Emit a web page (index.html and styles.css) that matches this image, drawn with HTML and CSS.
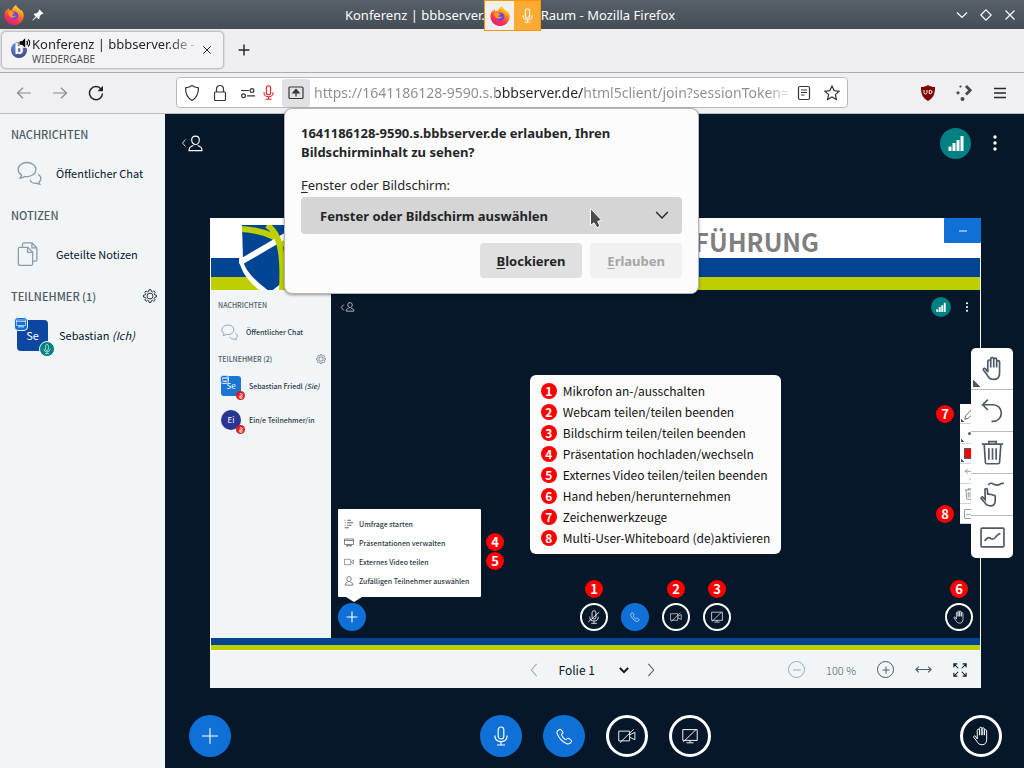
FILE: index.html
```html
<!DOCTYPE html>
<html lang="de">
<head>
    <meta charset="UTF-8">
    <meta name="viewport" content="width=device-width, initial-scale=1.0">
    <title>Konferenz | bbbserver.de</title>
    <link rel="stylesheet" href="styles.css">
</head>
<body>
    <!-- Icons -->
    <svg class="sprite" aria-hidden="true">
        <defs>
            <linearGradient id="fox-body" x1="0.8" y1="0" x2="0.3" y2="1">
                <stop offset="0" stop-color="#fff44f"/>
                <stop offset="0.35" stop-color="#ff980e"/>
                <stop offset="0.7" stop-color="#ff3647"/>
                <stop offset="1" stop-color="#e31587"/>
            </linearGradient>
        </defs>
        <symbol id="firefox" viewBox="0 0 20 20">
            <path fill="url(#fox-body)" stroke="none" d="M12.2 0c.2 1.6 1.300 2.400 2.800 3.600 1 .8 1.500 1.500 1.900 2.300l.3-1.200C19 6.600 19.800 8.600 19.800 10.600A9.700 9.500 0 0 1 .4 10.600c0-2.600.8-4.600 1.900-6.200l.5 1.300L4.400 3l.8 2.300c.8-.3 1.900-.4 2.800-.1C8.200 3.200 10 1 12.200 0z"/>
            <circle cx="10.200" cy="10.800" r="4.300" fill="#7542e5" stroke="none"/>
            <path fill="#ff9a1f" stroke="none" d="M4 7.200c2-.9 3.500-.5 4.700.3l2 .3c-.2 1.200-2.200 1.300-2.500 2.200.3 1.200 2 1.300 3.700.6-1 2.200-3.500 2.700-5.500 1.300C4.800 10.800 4 9 4 7.200z"/>
        </symbol>
        <symbol id="pin" viewBox="0 0 12 12">
            <path fill="currentColor" stroke="none" d="M7.500.5l4 4-1 .8-.8-.2-2 2.200-.2 2.200-1 .8-2-2L1 11.600.4 11l3.300-3.500-2-2 .8-1 2.200-.2 2.200-2L6.700 1.300z"/>
        </symbol>
        <symbol id="chev-down" viewBox="0 0 12 12"><path d="M1 3.500l5 5 5-5"/></symbol>
        <symbol id="chev-left" viewBox="0 0 12 16"><path d="M9 1L3 8l6 7"/></symbol>
        <symbol id="chev-right" viewBox="0 0 12 16"><path d="M3 1l6 7-6 7"/></symbol>
        <symbol id="diamond" viewBox="0 0 12 12"><path d="M6 .8L11.200 6 6 11.200.8 6z"/></symbol>
        <symbol id="cross" viewBox="0 0 12 12"><path d="M1.500 1.500l9 9m0-9l-9 9"/></symbol>
        <symbol id="plus" viewBox="0 0 20 20"><path d="M10 1v18M1 10h18"/></symbol>
        <symbol id="minus" viewBox="0 0 10 10"><path d="M0 5h10"/></symbol>
        <symbol id="arrow-left" viewBox="0 0 16 12"><path d="M15 6H1.500M7 .8L1.500 6 7 11.200"/></symbol>
        <symbol id="arrow-right" viewBox="0 0 16 12"><path d="M1 6h13.500M9 .8L14.500 6 9 11.200"/></symbol>
        <symbol id="reload" viewBox="0 0 16 16">
            <path d="M13.200 4.200A6.500 6.500 0 1 0 14.500 8.500"/><path fill="currentColor" stroke="none" d="M15 .8v5.500H9.500z"/>
        </symbol>
        <symbol id="shield" viewBox="0 0 16 18"><path d="M8 1.500c2 1.500 4 2 6.500 2.300 0 6-2 10.200-6.500 12.700C3.500 14 1.500 9.800 1.500 3.800 4 3.500 6 3 8 1.500z"/></symbol>
        <symbol id="lock" viewBox="0 0 14 18"><rect x="1.500" y="8" width="11" height="8.500" rx="1"/><path d="M3.500 8V5a3.500 3.500 0 0 1 7 0v3"/></symbol>
        <symbol id="perms" viewBox="0 0 16 10"><path d="M1 2.500h8M7 7.800h8"/><circle cx="12" cy="2.500" r="1.900"/><circle cx="3.500" cy="7.800" r="1.900"/></symbol>
        <symbol id="mic" viewBox="0 0 14 20">
            <rect x="4.200" y="1" width="5.600" height="12" rx="2.800"/><path d="M1 9.500v1.200a6 5 0 0 0 12 0V9.500M7 16v2.800M3 19h8"/>
        </symbol>
        <symbol id="mic-off" viewBox="0 0 18 20">
            <rect x="6.200" y="1" width="5.600" height="12" rx="2.800"/><path d="M3 9.500v1.200a6 5 0 0 0 12 0V9.500M9 16v2.800M5 19h8M1 17L16.500 3"/>
        </symbol>
        <symbol id="share" viewBox="0 0 16 14"><rect x="1" y="1" width="14" height="11.500" rx="1"/><path fill="currentColor" d="M8 3.500L5 6.800h6zM8 6.500v4"/></symbol>
        <symbol id="reader" viewBox="0 0 14 16"><rect x="1.500" y="1.500" width="11" height="13" rx="1.500"/><path d="M4 5h6M4 7.500h6M4 10h3.500"/></symbol>
        <symbol id="star" viewBox="0 0 16 16"><path d="M8 1l2.100 4.600 5 .6-3.700 3.400 1 5L8 12l-4.400 2.600 1-5L.9 6.200l5-.6z"/></symbol>
        <symbol id="burger" viewBox="0 0 14 12"><path d="M1 1.500h12M1 6h12M1 10.500h12"/></symbol>
        <symbol id="plasma" viewBox="0 0 18 16">
            <g fill="currentColor" stroke="none"><circle cx="5.500" cy="1.500" r="1.100"/><circle cx="3" cy="7.800" r="1.600"/><circle cx="7.500" cy="14" r="2"/></g>
            <path stroke-width="2.800" d="M11 1l4.200 4.300L11 9.500"/>
        </symbol>
        <symbol id="speaker" viewBox="0 0 12 10">
            <path fill="currentColor" stroke="none" d="M.5 3.200H3L6.200.3v9.400L3 6.800H.5z"/><path d="M7.700 3c1 1.200 1 2.800 0 4M9.200 1.500c2 2 2 5 0 7"/>
        </symbol>
        <symbol id="chat" viewBox="0 0 25 25">
            <path d="M10 1.500C5 1.500 1.200 4.600 1.200 8.600c0 2.400 1.200 4.200 3.300 5.500-.1 1.200-.6 2-1.500 2.900 1.900-.1 3.300-.6 4.500-1.600.8.200 1.600.2 2.500.2 5 0 8.900-3 8.900-7S15 1.500 10 1.500z"/>
            <path d="M21 13.500c1.700.8 2.900 2.300 2.900 4 0 1.500-.8 2.800-2.100 3.700.1.800.4 1.400 1 2-1.300 0-2.200-.4-3-1-3 .6-6-.7-6.600-3.200"/>
        </symbol>
        <symbol id="notes" viewBox="0 0 25 26">
            <path d="M2.300 5.500h8.500l5 5v12a1.700 1.700 0 0 1-1.700 1.700H2.300A1.500 1.500 0 0 1 .9 22.500V7a1.500 1.500 0 0 1 1.400-1.500z"/><path d="M10.500 5.700v5h5M5.200 5V2.500A1.500 1.500 0 0 1 6.700 1h8.500l5 5.200v12.300a1.600 1.600 0 0 1-1.600 1.500h-2.500M15 1.200v5h5"/>
        </symbol>
        <symbol id="gear" viewBox="0 0 20 20">
            <path d="M8.600 1h2.800l.5 2.500 1.600.7 2.100-1.500 1.900 1.900L16 6.700l.7 1.700 2.500.4v2.700l-2.500.5-.7 1.600 1.500 2.100-1.900 1.900-2.100-1.500-1.600.7-.5 2.400H8.600l-.5-2.400-1.600-.7-2.100 1.500-1.900-1.900L4 13.600 3.300 12l-2.500-.5V8.800l2.500-.4L4 6.700 2.500 4.600l1.900-1.900 2.100 1.500 1.600-.7z"/><circle cx="10" cy="10.100" r="4.200"/>
        </symbol>
        <symbol id="person" viewBox="0 0 16 18"><path d="M8 1.200c2.700 0 4 1.700 4 4 0 2.500-1.600 4.800-4 4.800S4 7.700 4 5.200c0-2.300 1.300-4 4-4zM5.700 11C4 12 1.200 12.500 1.200 15v1.500h13.600V15c0-2.500-2.800-3-4.500-4"/></symbol>
        <symbol id="bars" viewBox="0 0 16 16"><path fill="currentColor" stroke="none" d="M.5 11.500h3V16h-3zM4.500 8h3v8h-3zM8.500 5h3v11h-3zM12.500 1h3v15h-3z"/></symbol>
        <symbol id="dots" viewBox="0 0 4 16"><g fill="currentColor" stroke="none"><circle cx="2" cy="2" r="1.700"/><circle cx="2" cy="8" r="1.700"/><circle cx="2" cy="14" r="1.700"/></g></symbol>
        <symbol id="board" viewBox="0 0 20 18"><path d="M1 1h18v11H1zM1 4h18M6 16.500l2.500-4.300M14 16.500l-2.500-4.300M4 14.500h12"/></symbol>
        <symbol id="phone" viewBox="0 0 20 20"><path d="M3.200 2.300C1.500 3 .8 5 1.600 7c2 5 5.500 9 10.500 11.200 2 1 4.200.3 5.500-1.200 1-1.200.8-2.200-.2-3l-2-1.500c-1-.7-2-.5-2.700.4-.6.8-1.400 1-2.200.3-1.700-1.200-3-2.900-3.800-4.700-.4-.9-.1-1.500.6-2C8.200 6 8.300 5 7.700 4.200L6.300 2.500c-.8-1-1.900-1.100-3.100-.2z"/></symbol>
        <symbol id="cam-off" viewBox="0 0 24 20"><path d="M1 3.500h14.500v13H1zM15.500 8.500L22.500 5v10l-7-3.500M2.500 19L21 1"/></symbol>
        <symbol id="cam" viewBox="0 0 24 20"><path d="M1 3.500h15v13H1zM18.500 8.500L22.500 5v10l-4-3.500z"/></symbol>
        <symbol id="desk-off" viewBox="0 0 20 20"><path d="M1 2h18v13.500H1zM10 15.500v2.700M5.500 18.500h9M1.500 17.500L17.500 2"/></symbol>
        <symbol id="hand" viewBox="0 0 20 24"><path d="M5.500 15.500V5.200a1.400 1.400 0 0 1 2.800 0V11 3a1.400 1.400 0 0 1 2.900 0v8-7.500a1.400 1.400 0 0 1 2.800 0V11 5.800a1.400 1.400 0 0 1 2.800 0V16c0 4.200-2 6.500-5.500 6.500-3.300 0-5-1.500-6.300-4.200L1.300 13.500c-.5-1.300 1-2.300 2-1.300l2.200 3.300"/></symbol>
        <symbol id="undo" viewBox="0 0 22 24"><path d="M6.500 1.500L1.500 6.500l5 5M1.800 6.500h9.700a8 8 0 0 1 0 16H10"/></symbol>
        <symbol id="trash" viewBox="0 0 22 24"><path d="M.8 4h20.400M7.500 4V1.500h7V4M3 4l1.200 17.500a1.500 1.500 0 0 0 1.500 1.300h10.600a1.500 1.500 0 0 0 1.500-1.300L19 4M7.500 8v11M11 8v11M14.500 8v11"/></symbol>
        <symbol id="multi" viewBox="0 0 24 24"><path d="M8 3c1.500-3 4-1.500 6-.5s4 .5 6-.8L23 1"/><path d="M5 15.500L4.700 7.500c0-1.500 2.300-1.500 2.400 0l.3 5c0-1.300 2.500-1.300 2.500.3 0-1.200 2.400-1.200 2.500.5 0-1 2.200-1 2.200.6v4c0 3-1.600 5-4.700 5-2.700 0-4.200-1.200-5.400-3.300L1.300 16c-.7-1.300.9-2.200 1.700-1.200L5 17z"/></symbol>
        <symbol id="chart" viewBox="0 0 24 20"><rect x="1" y="1" width="22" height="18" rx="1"/><path d="M4.500 13.500c2-3.500 4-4 6-2.500s3.500 0 5-2 2.500-2 4-3"/></symbol>
        <symbol id="pen" viewBox="0 0 16 16"><path d="M1 15l1.500-5L11 1.500 14.500 5 6 13.500z"/></symbol>
        <symbol id="list" viewBox="0 0 16 16"><path d="M1 2h1.500M5 2h6M1 6h1.500M5 6h10M1 10h1.500M5 10h7M1 14h7"/></symbol>
        <symbol id="fit" viewBox="0 0 18 8"><path d="M1 4h16M4 1L1 4l3 3M14 1l3 3-3 3"/></symbol>
        <symbol id="full" viewBox="0 0 16 16"><path d="M1 5V1h4M1 1l5 5M11 1h4v4M15 1l-5 5M1 11v4h4M1 15l5-5M15 11v4h-4M15 15l-5-5"/></symbol>
    </svg>

    <!-- Fensterleiste -->
    <header class="titlebar">
        <div class="titlebar-side">
            <svg class="icon s20"><use href="#firefox"/></svg>
            <svg class="icon s12"><use href="#pin"/></svg>
        </div>
        <div class="titlebar-text">Konferenz | bbbserver.de - BBB-Raum - Mozilla Firefox</div>
        <div class="titlebar-side window-buttons">
            <button aria-label="Minimieren"><svg class="icon s12"><use href="#chev-down"/></svg></button>
            <button aria-label="Maximieren"><svg class="icon s12"><use href="#diamond"/></svg></button>
            <button aria-label="Schließen"><svg class="icon s12"><use href="#cross"/></svg></button>
        </div>
        <div class="sharing-badge">
            <span><svg class="icon s20"><use href="#firefox"/></svg></span>
            <span class="sharing-mic"><svg class="icon mic16"><use href="#mic"/></svg></span>
        </div>
    </header>

    <!-- Tabs -->
    <div class="tabbar">
        <div class="tab">
            <div class="favicon">b<svg class="icon speaker"><use href="#speaker"/></svg></div>
            <div class="tab-label">
                <div class="tab-title">Konferenz | bbbserver.de -</div>
                <div class="tab-sub">WIEDERGABE</div>
            </div>
            <button class="tab-close" aria-label="Tab schließen"><svg class="icon s10"><use href="#cross"/></svg></button>
        </div>
        <button class="tab-new" aria-label="Neuer Tab"><svg class="icon s12"><use href="#plus"/></svg></button>
    </div>

    <!-- Navigation -->
    <div class="toolbar">
        <div class="nav-buttons">
            <button class="faded" aria-label="Zurück"><svg class="icon s16"><use href="#arrow-left"/></svg></button>
            <button class="faded" aria-label="Vor"><svg class="icon s16"><use href="#arrow-right"/></svg></button>
            <button aria-label="Neu laden"><svg class="icon s16 thick"><use href="#reload"/></svg></button>
        </div>
        <div class="urlbar">
            <button class="ub-btn" aria-label="Schutz"><svg class="icon s18"><use href="#shield"/></svg></button>
            <button class="ub-btn" aria-label="Verbindung"><svg class="icon s18"><use href="#lock"/></svg></button>
            <button class="ub-btn slim perms" aria-label="Berechtigungen"><svg class="icon s16"><use href="#perms"/></svg></button>
            <button class="ub-btn slim red" aria-label="Mikrofon"><svg class="icon mic16"><use href="#mic"/></svg></button>
            <button class="ub-btn share" aria-label="Bildschirmfreigabe"><svg class="icon s16"><use href="#share"/></svg></button>
            <input class="url" type="text" aria-label="Adresse" value="https://1641186128-9590.s.bbbserver.de/html5client/join?sessionToken=">
            <button class="ub-btn" aria-label="Leseansicht"><svg class="icon s16"><use href="#reader"/></svg></button>
            <button class="ub-btn" aria-label="Lesezeichen"><svg class="icon s16"><use href="#star"/></svg></button>

            <div class="popup" role="dialog" aria-labelledby="popup-title">
                <h2 id="popup-title">1641186128-9590.s.bbbserver.de erlauben, Ihren Bildschirminhalt zu sehen?</h2>
                <label for="screen"><u>F</u>enster oder Bildschirm:</label>
                <div class="popup-select">
                    <select id="screen"><option>Fenster oder Bildschirm auswählen</option></select>
                    <svg class="icon s14"><use href="#chev-down"/></svg>
                    <svg class="cursor" viewBox="0 0 14 22"><path d="M1.500 1.500v17l3.500-2.700 3 5 3-1.700-2.300-4.600 3.800-1.400z" fill="#4a4a4a" stroke="#fff"/></svg>
                </div>
                <div class="popup-buttons">
                    <button><span><u>B</u>lockieren</span></button>
                    <button disabled><span><u>E</u>rlauben</span></button>
                </div>
            </div>
        </div>
        <div class="ext-buttons">
            <button class="ublock" aria-label="uBlock Origin"><svg viewBox="0 0 14 16"><path d="M7 0c2 1.400 4.500 2 7 2 0 7-1.500 11-7 14C1.500 13 0 9 0 2c2.500 0 5-.6 7-2z" fill="#800000"/><path d="M3 5v2.500a1.500 1.500 0 0 0 3 0V5M8.300 5v4M8.300 5.500a1.800 1.800 0 1 1 0 3" fill="none" stroke="#fff"/></svg></button>
            <button aria-label="Plasma Integration"><svg class="icon s18 dim"><use href="#plasma"/></svg></button>
            <button aria-label="Menü"><svg class="icon s14 thick"><use href="#burger"/></svg></button>
        </div>
    </div>

    <div class="app">
        <!-- Linke Seitenleiste -->
        <aside class="sidebar">
            <h2>NACHRICHTEN</h2>
            <a class="side-item" href="#chat"><svg class="icon s25 muted"><use href="#chat"/></svg><span>Öffentlicher Chat</span></a>
            <h2>NOTIZEN</h2>
            <a class="side-item" href="#notes"><svg class="icon s25 muted"><use href="#notes"/></svg><span>Geteilte Notizen</span></a>
            <h2>TEILNEHMER (1) <button aria-label="Teilnehmer verwalten"><svg class="icon s14"><use href="#gear"/></svg></button></h2>
            <div class="side-item user">
                <div class="avatar">Se
                    <span class="presenter"><svg class="icon s10"><use href="#board"/></svg></span>
                    <span class="voice"><svg class="icon s10"><use href="#mic"/></svg></span>
                </div>
                <span>Sebastian <i>(Ich)</i></span>
            </div>
        </aside>

        <main class="main">
            <div class="main-head">
                <button class="toggle" aria-label="Teilnehmerliste"><svg class="icon chev"><use href="#chev-left"/></svg><svg class="icon s17"><use href="#person"/></svg></button>
                <div class="head-right">
                    <button class="signal" aria-label="Verbindungsstatus"><svg class="icon s16"><use href="#bars"/></svg></button>
                    <button aria-label="Optionen"><svg class="icon s16"><use href="#dots"/></svg></button>
                </div>
            </div>

            <section class="presentation">
                <div class="slide">
                    <div class="slide-head">
                        <svg class="crest" viewBox="0 0 62 65">
                            <path d="M0 0h62v30C62 45 50 56 43 65H20C8 55 1 45 0 33z" fill="#fff"/>
                            <path d="M3 0h56v30c-1 15-15 28-28 37C18 57 5 46 4 34z" fill="#004494"/>
                            <path d="M3 4c18 1 32 6 44 16 5 5 9 9 12 14" fill="none" stroke="#becf00" stroke-width="6"/>
                            <path d="M0 38L60 3" stroke="#fff" stroke-width="6"/>
                            <path d="M28 0c12 8 17 25 15 65" fill="none" stroke="#becf00" stroke-width="6"/>
                        </svg>
                        <h1>FÜHRUNG</h1>
                    </div>
                    <div class="slide-body">
                        <div class="mini-side">
                            <h3>NACHRICHTEN</h3>
                            <div class="mini-item"><svg class="icon s17 muted"><use href="#chat"/></svg>Öffentlicher Chat</div>
                            <h3>TEILNEHMER (2) <svg class="icon s10"><use href="#gear"/></svg></h3>
                            <div class="mini-item"><div class="mini-avatar blue">Se<span class="mini-pres"><svg class="icon"><use href="#board"/></svg></span><span class="mini-muted"><svg class="icon"><use href="#mic-off"/></svg></span></div><span>Sebastian Friedl <i>(Sie)</i></span></div>
                            <div class="mini-item last"><div class="mini-avatar round">Ei<span class="mini-muted"><svg class="icon"><use href="#mic-off"/></svg></span></div>Ein/e Teilnehmer/in</div>
                        </div>
                        <div class="stage">
                            <div class="stage-head">
                                <div class="toggle"><svg class="icon chev"><use href="#chev-left"/></svg><svg class="icon s10"><use href="#person"/></svg></div>
                                <div class="stage-right">
                                    <div class="signal small"><svg class="icon s10"><use href="#bars"/></svg></div>
                                    <svg class="icon s10"><use href="#dots"/></svg>
                                </div>
                            </div>
                            <ul class="legend">
                                <li><b class="num">1</b>Mikrofon an-/ausschalten</li>
                                <li><b class="num">2</b>Webcam teilen/teilen beenden</li>
                                <li><b class="num">3</b>Bildschirm teilen/teilen beenden</li>
                                <li><b class="num">4</b>Präsentation hochladen/wechseln</li>
                                <li><b class="num">5</b>Externes Video teilen/teilen beenden</li>
                                <li><b class="num">6</b>Hand heben/herunternehmen</li>
                                <li><b class="num">7</b>Zeichenwerkzeuge</li>
                                <li><b class="num">8</b>Multi-User-Whiteboard (de)aktivieren</li>
                            </ul>
                            <div class="stage-foot">
                                <div class="dot fill">
                                    <svg class="icon s12"><use href="#plus"/></svg>
                                    <ul class="mini-menu">
                                        <li><svg class="icon s10"><use href="#list"/></svg>Umfrage starten</li>
                                        <li><svg class="icon s10"><use href="#board"/></svg>Präsentationen verwalten<b class="num beside">4</b></li>
                                        <li><svg class="icon s10"><use href="#cam"/></svg>Externes Video teilen<b class="num beside">5</b></li>
                                        <li><svg class="icon s10"><use href="#person"/></svg>Zufälligen Teilnehmer auswählen</li>
                                    </ul>
                                </div>
                                <div class="dot-group">
                                    <div class="dot"><svg class="icon s14"><use href="#mic-off"/></svg><b class="num above">1</b></div>
                                    <div class="dot fill"><svg class="icon s10"><use href="#phone"/></svg></div>
                                    <div class="dot"><svg class="icon s12"><use href="#cam-off"/></svg><b class="num above">2</b></div>
                                    <div class="dot"><svg class="icon s12"><use href="#desk-off"/></svg><b class="num above">3</b></div>
                                </div>
                                <div class="dot"><svg class="icon s14"><use href="#hand"/></svg><b class="num above">6</b></div>
                            </div>
                            <ul class="mini-tools">
                                <li class="corner"><svg class="icon s12"><use href="#pen"/></svg><b class="num before">7</b></li>
                                <li class="corner"><i class="point"></i></li>
                                <li class="corner"><i class="swatch"></i></li>
                                <li><svg class="icon s12"><use href="#undo"/></svg></li>
                                <li><svg class="icon s12"><use href="#trash"/></svg></li>
                                <li><svg class="icon s12"><use href="#chart"/></svg><b class="num before">8</b></li>
                            </ul>
                        </div>
                    </div>
                    <div class="slide-stripe"></div>
                </div>

                <div class="controls">
                    <div class="pager">
                        <button class="faded" aria-label="Vorherige Folie"><svg class="icon s14"><use href="#chev-left"/></svg></button>
                        <div class="page-select">
                            <select aria-label="Folie auswählen"><option>Folie 1</option></select>
                            <svg class="icon s10 bold"><use href="#chev-down"/></svg>
                        </div>
                        <button aria-label="Nächste Folie"><svg class="icon s14"><use href="#chev-right"/></svg></button>
                    </div>
                    <div class="zoom">
                        <button class="ring faded" aria-label="Verkleinern"><svg class="icon s8"><use href="#minus"/></svg></button>
                        <span>100 %</span>
                        <button class="ring" aria-label="Vergrößern"><svg class="icon s8 bold"><use href="#plus"/></svg></button>
                        <button aria-label="An Breite anpassen"><svg class="icon s17"><use href="#fit"/></svg></button>
                        <button class="dark" aria-label="Vollbild"><svg class="icon s14"><use href="#full"/></svg></button>
                    </div>
                </div>

                <button class="minimize" aria-label="Präsentation minimieren"><svg class="icon s8"><use href="#minus"/></svg></button>

                <div class="tools">
                    <button class="corner" aria-label="Verschieben"><svg class="icon s25"><use href="#hand"/></svg></button>
                    <button aria-label="Rückgängig"><svg class="icon s25"><use href="#undo"/></svg></button>
                    <button aria-label="Löschen"><svg class="icon s25"><use href="#trash"/></svg></button>
                    <button aria-label="Mehrbenutzermodus"><svg class="icon s25"><use href="#multi"/></svg></button>
                    <button aria-label="Whiteboard"><svg class="icon s25"><use href="#chart"/></svg></button>
                </div>
            </section>

            <footer class="actions">
                <button class="round-btn fill" aria-label="Aktionen"><svg class="icon s18"><use href="#plus"/></svg></button>
                <div class="action-group">
                    <button class="round-btn fill" aria-label="Stummschalten"><svg class="icon s20"><use href="#mic"/></svg></button>
                    <button class="round-btn fill" aria-label="Audio beenden"><svg class="icon s17"><use href="#phone"/></svg></button>
                    <button class="round-btn" aria-label="Webcam freigeben"><svg class="icon s18"><use href="#cam-off"/></svg></button>
                    <button class="round-btn" aria-label="Bildschirm freigeben"><svg class="icon s16"><use href="#desk-off"/></svg></button>
                </div>
                <button class="round-btn" aria-label="Hand heben"><svg class="icon s20"><use href="#hand"/></svg></button>
            </footer>
        </main>
    </div>
</body>
</html>
```
FILE: styles.css
```css
* {
    box-sizing: border-box;
}
body {
    margin: 0;
    height: 100vh;
    display: flex;
    flex-direction: column;
    overflow: hidden;
    font-family: "Noto Sans", sans-serif;
    font-size: 13px;
    color: #232629;
    background: #06172a;
}
button, select, input {
    font: inherit;
    color: inherit;
    border: 0;
    padding: 0;
    margin: 0;
    background: none;
}
button {
    display: flex;
    align-items: center;
    justify-content: center;
}
select {
    appearance: none;
}
ul {
    list-style: none;
    margin: 0;
    padding: 0;
}
h1, h2, h3 {
    margin: 0;
}

/* icons */
.sprite {
    position: absolute;
    width: 0;
    height: 0;
}
.icon {
    fill: none;
    stroke: currentColor;
    stroke-width: 1.2;
    flex: none;
}
.s8 { width: 8px; height: 8px; }
.s10 { width: 10px; height: 10px; }
.s12 { width: 12px; height: 12px; }
.s14 { width: 14px; height: 14px; }
.s16 { width: 16px; height: 16px; }
.s17 { width: 17px; height: 17px; }
.s18 { width: 18px; height: 18px; }
.s20 { width: 20px; height: 20px; }
.s25 { width: 25px; height: 25px; }
.mic16 { width: 11px; height: 15px; stroke-width: 1.5; }
.thick { stroke-width: 1.5; }
.bold { stroke-width: 2.4; }
.muted { color: #8b9aa8; stroke-width: 1.3; }
.dim { color: #45494d; }
.faded { opacity: 0.5; }

/* title bar */
.titlebar {
    position: relative;
    display: flex;
    flex: none;
    align-items: center;
    justify-content: space-between;
    height: 29px;
    padding: 0 8px 0 4px;
    background: linear-gradient(#566069, #454e56);
    color: #fcfcfc;
}
.titlebar-side {
    display: flex;
    align-items: center;
    gap: 8px;
    width: 80px;
}
.window-buttons {
    justify-content: flex-end;
    gap: 12px;
}
.sharing-badge {
    position: absolute;
    top: 0;
    left: calc(50% - 28px);
    display: flex;
    width: 57px;
    height: 31px;
    border: 1px solid #ff9500;
    background: #f0f0f0;
    z-index: 3;
}
.sharing-badge span {
    flex: 1;
    display: flex;
    align-items: center;
    justify-content: center;
}
.sharing-badge .sharing-mic {
    flex: none;
    width: 26px;
    background: #ffaa33;
}

/* tabs */
.tabbar {
    display: flex;
    flex: none;
    align-items: center;
    height: 44px;
    padding: 1px 1px 2px;
    background: #efeff1;
    border-bottom: 1px solid #a9abae;
}
.tab {
    display: flex;
    align-items: center;
    width: 223px;
    height: 38px;
    padding: 0 11px 0 9px;
    background: #f3f3f6;
    border: 1px solid #c0c2c5;
    border-radius: 5px;
    box-shadow: 0 0 2px #aaa;
}
.favicon {
    position: relative;
    width: 16px;
    height: 16px;
    margin-right: 5px;
    border-radius: 50%;
    background: radial-gradient(circle at 40% 30%, #7d8fc4, #27357e);
    color: #fff;
    font-size: 14px;
    font-weight: 700;
    line-height: 14px;
    text-align: center;
}
.speaker {
    position: absolute;
    top: -4px;
    left: 8px;
    width: 12px;
    height: 10px;
    color: #000;
    background: #f3f3f6;
    border-radius: 5px;
}
.tab-label {
    flex: 1;
    min-width: 0;
}
.tab-title {
    white-space: nowrap;
    line-height: 18px;
    -webkit-mask-image: linear-gradient(to right, #000 80%, transparent);
    mask-image: linear-gradient(to right, #000 80%, transparent);
}
.tab-sub {
    font-size: 10px;
    line-height: 12px;
    color: #4d5054;
}
.tab-new {
    margin-left: 14px;
}
.tab-new .icon {
    stroke-width: 2.4;
}

/* navigation */
.toolbar {
    display: flex;
    flex: none;
    align-items: center;
    height: 41px;
    padding: 0 16px 1px 0;
    background: #f0f0f3;
    border-bottom: 1px solid #bcbec0;
}
.nav-buttons {
    display: flex;
    gap: 20px;
    width: 176px;
    padding-left: 16px;
}
.urlbar {
    position: relative;
    flex: 1;
    display: flex;
    align-items: center;
    height: 31px;
    padding: 0 1px;
    background: #fff;
    border: 1px solid #b8babc;
    border-radius: 4px;
}
.ub-btn {
    flex: none;
    width: 28px;
    height: 28px;
    color: #33373a;
}
.ub-btn.slim {
    width: 20px;
}
.ub-btn.perms {
    margin-left: 4px;
}
.ub-btn.red {
    color: #e22020;
}
.ub-btn.share {
    margin-left: 4px;
    background: #e2e2e4;
    border-radius: 3px;
}
.url {
    flex: 1;
    min-width: 0;
    margin-left: 4px;
    font-size: 14px;
    color: transparent;
    background: linear-gradient(to right, #8a8c8e 182px, #232629 182px, #232629 269px, #8a8c8e 269px, #8a8c8e 95%, #eee);
    -webkit-background-clip: text;
    background-clip: text;
}
.ext-buttons {
    display: flex;
    justify-content: flex-end;
    align-items: center;
    gap: 20px;
    width: 160px;
    padding-right: 1px;
}
.ublock svg {
    width: 14px;
    height: 16px;
}

/* permission popup */
.popup {
    position: absolute;
    top: 30px;
    left: 107px;
    width: 415px;
    padding: 15px 16px 15px;
    background: #fcfcfc;
    border: 1px solid #b4b6b8;
    border-radius: 8px;
    box-shadow: 0 1px 3px rgba(0, 0, 0, 0.4);
    z-index: 5;
}
.popup h2 {
    font-size: 13px;
    font-weight: 700;
    line-height: 19px;
    margin-bottom: 13px;
    padding-right: 60px;
}
.popup label {
    display: block;
    margin-bottom: 2px;
    line-height: 20px;
}
.popup u {
    text-underline-offset: 2px;
}
.popup-select {
    position: relative;
    margin-bottom: 9px;
}
.popup-select select {
    display: block;
    width: 100%;
    height: 37px;
    padding: 0 19px;
    background: #d5d5d5;
    border-radius: 4px;
    font-weight: 700;
}
.popup-select .icon {
    position: absolute;
    top: 11px;
    right: 13px;
    pointer-events: none;
}
.cursor {
    position: absolute;
    top: 10px;
    left: 288px;
    width: 14px;
    height: 22px;
}
.popup-buttons {
    display: flex;
    justify-content: flex-end;
    gap: 8px;
}
.popup-buttons button {
    height: 35px;
    padding: 0 17px;
    background: #e0e0e0;
    border-radius: 4px;
    font-weight: 700;
}
.popup-buttons button:disabled {
    background: #f1f1f1;
    color: #a5a6a8;
}

/* conference app */
.app {
    flex: 1;
    min-height: 0;
    display: flex;
    font-family: "Noto Sans CJK SC", "Noto Sans", sans-serif;
    font-size: 11px;
    line-height: 20px;
}
.sidebar {
    flex: none;
    width: 165px;
    padding: 10px 8px 0 11px;
    background: #f1f5f8;
    color: #06172a;
}
.sidebar h2 {
    display: flex;
    align-items: center;
    justify-content: space-between;
    height: 20px;
    font-size: 11px;
    font-weight: 500;
    color: #4e5a66;
}
.sidebar h2 button {
    color: #06172a;
}
.side-item {
    display: flex;
    align-items: center;
    gap: 14px;
    height: 40px;
    margin: 9px 0 12px;
    padding-left: 6px;
    color: inherit;
    text-decoration: none;
    white-space: nowrap;
}
.side-item.user {
    gap: 11px;
}
.avatar {
    position: relative;
    width: 31px;
    height: 31px;
    background: #0d47a1;
    border-radius: 4px;
    color: #fff;
    line-height: 31px;
    text-align: center;
}
.presenter, .voice {
    position: absolute;
    display: flex;
    align-items: center;
    justify-content: center;
    width: 14px;
    height: 14px;
    border: 1px solid #f1f5f8;
    color: #fff;
}
.presenter {
    top: -3px;
    left: -3px;
    background: #0f70d7;
    border-radius: 4px;
}
.voice {
    right: -7px;
    bottom: -6px;
    width: 16px;
    height: 16px;
    background: #008081;
    border-radius: 50%;
}

.main {
    flex: 1;
    min-width: 0;
    display: flex;
    flex-direction: column;
    background: #06172a;
    color: #fff;
}
.main-head {
    display: flex;
    align-items: center;
    justify-content: space-between;
    height: 58px;
    padding: 0 21px 0 16px;
}
.toggle {
    display: flex;
    align-items: center;
}
.toggle .chev {
    width: 6px;
    height: 10px;
    stroke-width: 1.6;
}
.head-right {
    display: flex;
    align-items: center;
    gap: 16px;
}
.signal {
    display: flex;
    align-items: center;
    justify-content: center;
    width: 31px;
    height: 31px;
    background: #008081;
    border-radius: 50%;
}
.signal.small {
    width: 20px;
    height: 20px;
}

/* presentation */
.presentation {
    position: relative;
    flex: 1;
    min-height: 0;
    display: flex;
    flex-direction: column;
    margin: 46px 43px 27px 45px;
}
.slide {
    flex: 1;
    display: flex;
    flex-direction: column;
    border: 1px solid #fff;
    border-top: 0;
    background: #fff;
}
.slide-head {
    display: flex;
    align-items: flex-start;
    height: 72px;
    padding: 7px 0 0 28px;
    background: linear-gradient(#fff 40px, #004494 40px, #004494 59px, #becf00 59px);
}
.crest {
    width: 62px;
    height: 65px;
}
.slide-head h1 {
    flex: 1;
    padding-right: 161px;
    font-size: 25px;
    font-weight: 700;
    line-height: 32px;
    text-align: right;
    color: #7f7f7f;
}
.slide-body {
    flex: 1;
    display: flex;
    background: #06172a;
}
.slide-stripe {
    height: 12px;
    background: linear-gradient(#004494 7px, #becf00 7px);
}
.mini-side {
    width: 120px;
    padding: 10px 5px 0 7px;
    background: #f1f5f8;
    color: #2c3a48;
    font-size: 7px;
    line-height: 10px;
    font-weight: 500;
    white-space: nowrap;
}
.mini-side h3 {
    display: flex;
    justify-content: space-between;
    align-items: center;
    height: 10px;
    font-size: 7px;
    font-weight: 500;
    color: #4e5a66;
}
.mini-item {
    display: flex;
    align-items: center;
    gap: 8px;
    height: 20px;
    margin: 12px 0;
    padding-left: 3px;
}
.mini-item.last {
    margin-top: 14px;
}
.mini-avatar {
    position: relative;
    width: 20px;
    height: 20px;
    border-radius: 3px;
    background: #1976d2;
    color: #fff;
    font-size: 8px;
    font-weight: 400;
    line-height: 20px;
    text-align: center;
}
.mini-avatar.round {
    border-radius: 50%;
    background: #283593;
}
.mini-pres, .mini-muted {
    position: absolute;
    display: flex;
    align-items: center;
    justify-content: center;
    width: 9px;
    height: 9px;
}
.mini-pres {
    top: -1px;
    left: -1px;
    background: #0f70d7;
    border: 1px solid #cfe0f2;
    border-radius: 3px;
}
.mini-muted {
    right: -4px;
    bottom: -4px;
    background: #e01b1b;
    border-radius: 50%;
}
.mini-pres .icon, .mini-muted .icon {
    width: 6px;
    height: 6px;
    stroke-width: 2;
}
.stage {
    position: relative;
    flex: 1;
    display: flex;
    flex-direction: column;
    padding: 0 7px;
}
.stage-head {
    display: flex;
    align-items: center;
    justify-content: space-between;
    height: 34px;
    padding: 0 1px 0 2px;
}
.stage-head .toggle .chev {
    width: 5px;
    height: 7px;
}
.stage-right {
    display: flex;
    align-items: center;
    gap: 11px;
}
.legend {
    align-self: center;
    margin-top: 51px;
    padding: 5px 11px 6px;
    background: #fcfcfc;
    border-radius: 6px;
    color: #111;
    font-size: 12px;
}
.legend li {
    display: flex;
    align-items: center;
    gap: 6px;
    height: 21px;
}
.num {
    display: block;
    width: 18px;
    height: 18px;
    border-radius: 50%;
    background: #f00;
    color: #fff;
    font-size: 13px;
    font-weight: 700;
    line-height: 18px;
    text-align: center;
}
.legend .num {
    width: 16px;
    height: 16px;
    font-size: 12px;
    line-height: 16px;
}
.num.above {
    position: absolute;
    left: 3px;
    bottom: 31px;
}
.num.beside {
    position: absolute;
    left: 148px;
    top: 0;
}
.num.before {
    position: absolute;
    right: 26px;
    top: 1px;
}
.stage-foot {
    display: flex;
    justify-content: space-between;
    margin: auto 0 7px;
}
.dot-group {
    display: flex;
    gap: 13px;
}
.dot {
    position: relative;
    display: flex;
    align-items: center;
    justify-content: center;
    width: 28px;
    height: 28px;
    border: 2px solid #fff;
    border-radius: 50%;
}
.dot.fill {
    border: 0;
    background: #0f70d7;
}
.dot.fill .s12 {
    stroke-width: 1.8;
}
.mini-menu {
    position: absolute;
    left: 0;
    bottom: 34px;
    width: 143px;
    padding: 5px 0 7px;
    background: #fff;
    border-radius: 1px;
    color: #2c3a48;
    font-size: 7px;
    font-weight: 500;
    white-space: nowrap;
}
.mini-menu::after {
    content: "";
    position: absolute;
    left: 8px;
    top: 100%;
    border: 8px solid transparent;
    border-top: 5px solid #fff;
    border-bottom: 0;
}
.mini-menu li {
    position: relative;
    display: flex;
    align-items: center;
    gap: 5px;
    height: 19px;
    padding-left: 6px;
}
.mini-tools {
    position: absolute;
    top: 114px;
    right: 0;
    width: 20px;
    background: #fff;
    color: #4e5a66;
}
.mini-tools li {
    position: relative;
    display: flex;
    align-items: center;
    height: 20px;
    padding-left: 4px;
    border-bottom: 1px solid #ccd3d9;
}
.corner {
    position: relative;
}
.corner::before {
    content: "";
    position: absolute;
    left: 2px;
    bottom: 2px;
    border: 0 solid;
    border-width: 8px 8px 0 0;
    border-color: transparent;
    background: linear-gradient(45deg, #4e5a66 50%, transparent 50%) border-box;
}
.mini-tools .corner::before {
    left: 1px;
    bottom: 1px;
    border-width: 4px 4px 0 0;
}
.point {
    width: 3px;
    height: 3px;
    margin-left: 4px;
    border-radius: 50%;
    background: #4e5a66;
}
.swatch {
    width: 12px;
    height: 11px;
    border: 1px solid #4e5a66;
    background: #f00;
}

/* slide controls */
.controls {
    display: grid;
    grid-template-columns: 1fr auto 1fr;
    align-items: center;
    height: 37px;
    padding-right: 7px;
    background: #f1f5f8;
    color: #4e5a66;
}
.pager {
    grid-column: 2;
    display: flex;
    align-items: center;
    gap: 15px;
}
.page-select {
    position: relative;
    width: 73px;
    color: #06172a;
}
.page-select select {
    display: block;
    width: 100%;
    padding-left: 3px;
    font-size: 12px;
}
.page-select .icon {
    position: absolute;
    top: 5px;
    right: 0;
    pointer-events: none;
}
.zoom {
    display: flex;
    align-items: center;
    justify-content: flex-end;
    gap: 21px;
    padding-right: 7px;
    font-weight: 300;
}
.ring {
    width: 17px;
    height: 17px;
    border: 1px solid #4e5a66;
    border-radius: 50%;
}
.dark {
    color: #06172a;
}
.minimize {
    position: absolute;
    top: 0;
    right: 0;
    width: 37px;
    height: 25px;
    background: #0f70d7;
    border-radius: 1px;
    color: #fff;
}
.tools {
    position: absolute;
    top: 130px;
    right: -32px;
    width: 42px;
    background: #fff;
    border-radius: 5px;
    color: #4e5a66;
}
.tools button {
    width: 100%;
    height: 42px;
    border-bottom: 1px solid #b4bdc5;
}
.tools button:last-child {
    border-bottom: 0;
}
.tools .icon {
    stroke-width: 1.6;
}

/* action bar */
.actions {
    display: flex;
    align-items: center;
    justify-content: space-between;
    padding: 0 22px 11px 24px;
}
.action-group {
    display: flex;
    gap: 21px;
}
.round-btn {
    width: 42px;
    height: 42px;
    border: 3px solid #fff;
    border-radius: 50%;
}
.round-btn.fill {
    border: 0;
    background: #0f70d7;
}
```
